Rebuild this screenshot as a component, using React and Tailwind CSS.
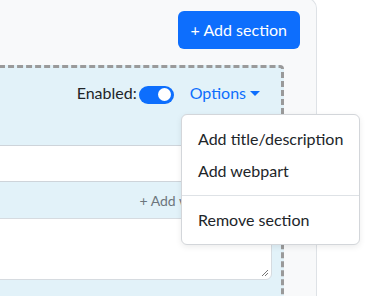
const font = "font-['Lato','Liberation_Sans',sans-serif]";

const App = () => {
    return (
        <div className={`relative w-[371px] h-[296px] overflow-hidden bg-white text-[#212529] ${font}`}>
            {/* page panel */}
            <div className="-mt-[2px] -ml-[20px] w-[337px] h-[300px] bg-[#f8f9fa] border-t border-r border-[#dee2e6] rounded-tr-[10px] pt-[12px] pr-4">
                <div className="flex justify-end">
                    <button className="h-[38px] px-[13px] rounded-[6px] bg-[#0d6efd] text-white text-[16px] leading-6 whitespace-nowrap">
                        + Add section
                    </button>
                </div>

                {/* section */}
                <div className="mt-4 mr-4 h-[260px] border-[3px] border-dashed border-[#9a9a9a] rounded-tr-[4px] bg-[#e2f2f9]">
                    <div className="h-[77px] pt-[13px] pr-[8px] flex justify-end items-start">
                        <div className="flex items-center h-6">
                            <span className="text-[16px] leading-6 whitespace-nowrap">Enabled:</span>
                            <div className="ml-[2px] w-[35px] h-[18px] rounded-full bg-[#0d6efd] flex items-center justify-end pr-[3px] mt-[3px]">
                                <div className="w-[13px] h-[13px] rounded-full bg-white"></div>
                            </div>
                        </div>
                        <button className="ml-[4px] h-6 pl-[12px] pr-[13px] flex items-center text-[16px] leading-6 text-[#0d6efd] whitespace-nowrap">
                            Options
                            <span className="ml-[4px] w-0 h-0 border-x-[5px] border-x-transparent border-t-[5px] border-t-[#0d6efd]"></span>
                        </button>
                    </div>
                    <div className="pr-[9px]">
                        <div className="h-[37px] bg-white border-y border-[#ced4da]"></div>
                        <div className="h-[36px] flex items-center justify-end pr-[42px] text-[14px] text-[#6c757d] whitespace-nowrap">
                            + Add webpart
                        </div>
                        <div className="relative h-[62px] bg-white border border-[#d6dbe0] rounded-[6px]">
                            <svg className="absolute right-[2px] bottom-[2px]" width="8" height="8" viewBox="0 0 8 8">
                                <path d="M1 7 L7 1 M4 7 L7 4" stroke="#777" strokeWidth="1" />
                            </svg>
                        </div>
                    </div>
                </div>
            </div>

            {/* options dropdown */}
            <div className="absolute left-[181px] top-[114px] w-[179px] py-2 bg-white border border-[#d3d6da] rounded-[6px] shadow-[0_2px_6px_rgba(0,0,0,0.08)]">
                <div className="px-4 py-1 text-[16px] leading-6 whitespace-nowrap">Add title/description</div>
                <div className="px-4 py-1 text-[16px] leading-6 whitespace-nowrap">Add webpart</div>
                <div className="my-2 border-t border-[#dee2e6]"></div>
                <div className="px-4 py-1 text-[16px] leading-6 whitespace-nowrap">Remove section</div>
            </div>
        </div>
    );
};

export default App;
